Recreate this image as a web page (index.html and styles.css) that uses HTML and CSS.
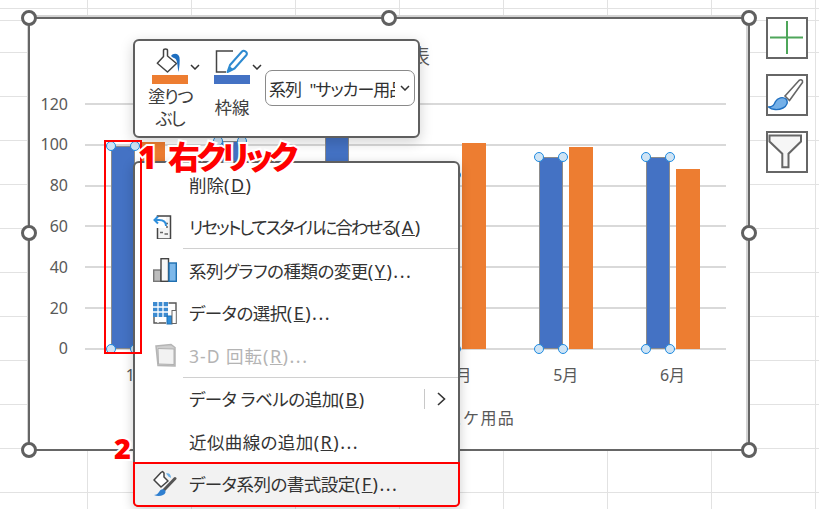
FILE: index.html
```html
<!DOCTYPE html>
<html lang="ja">
<head>
    <meta charset="UTF-8">
    <title>データ系列の書式設定</title>
    <link rel="stylesheet" href="styles.css">
</head>
<body>

<div class="sheet">
    <div class="chart">
        <div class="chart-title">月別売上表</div>
        <div class="chart-body">
            <div class="y-axis">
                <span>120</span><span>100</span><span>80</span><span>60</span><span>40</span><span>20</span><span>0</span>
            </div>
            <div class="plot">
                <div class="group">
                    <div class="bar blue" style="height: 82.5%"><i class="dot tl"></i><i class="dot tr"></i><i class="dot bl"></i><i class="dot br"></i></div>
                    <div class="bar orange" style="height: 84%"></div>
                </div>
                <div class="group">
                    <div class="bar blue" style="height: 84.5%"><i class="dot tl"></i><i class="dot tr"></i><i class="dot bl"></i><i class="dot br"></i></div>
                    <div class="bar orange" style="height: 79%"></div>
                </div>
                <div class="group">
                    <div class="bar blue" style="height: 88%"><i class="dot tl"></i><i class="dot tr"></i><i class="dot bl"></i><i class="dot br"></i></div>
                    <div class="bar orange" style="height: 70%"></div>
                </div>
                <div class="group">
                    <div class="bar blue" style="height: 70.700%"><i class="dot tl"></i><i class="dot tr"></i><i class="dot bl"></i><i class="dot br"></i></div>
                    <div class="bar orange" style="height: 83.800%"></div>
                </div>
                <div class="group">
                    <div class="bar blue" style="height: 78.200%"><i class="dot tl"></i><i class="dot tr"></i><i class="dot bl"></i><i class="dot br"></i></div>
                    <div class="bar orange" style="height: 82%"></div>
                </div>
                <div class="group">
                    <div class="bar blue" style="height: 78.200%"><i class="dot tl"></i><i class="dot tr"></i><i class="dot bl"></i><i class="dot br"></i></div>
                    <div class="bar orange" style="height: 73%"></div>
                </div>
            </div>
        </div>
        <div class="x-axis">
            <span>1月</span><span>2月</span><span>3月</span><span>4月</span><span>5月</span><span>6月</span>
        </div>
        <div class="legend">バスケ用品</div>

        <i class="handle h-tl"></i><i class="handle h-tc"></i><i class="handle h-tr"></i>
        <i class="handle h-ml"></i><i class="handle h-mr"></i>
        <i class="handle h-bl"></i><i class="handle h-bc"></i><i class="handle h-br"></i>
    </div>

    <div class="side-buttons">
        <div class="side-btn">
            <svg viewBox="2 2 38 38"><path d="M21 4V37M4 20.500H37" fill="none" stroke="#4ea65a" stroke-width="2"/></svg>
        </div>
        <div class="side-btn">
            <svg viewBox="2 2 38 38">
                <path d="M19 22L33 6.500C35 5 37 6 36.500 8.500L23.500 26.500Z" fill="#fff" stroke="#666" stroke-width="1.600"/>
                <path d="M2.500 33C7 33 8 31 9.500 27.500C11.500 23.500 17 22.500 20 25C22.500 28 21 32 17 34C12 36.500 6 36 2.500 33Z" fill="#74b0e8" stroke="#1f6fc0" stroke-width="1.400"/>
            </svg>
        </div>
        <div class="side-btn">
            <svg viewBox="2 2 38 38"><path d="M3.500 4.500H35V10.500L22.500 22.700V36.300H16.300V22.700L3.500 10.500Z" fill="#f6f6f6" stroke="#666" stroke-width="2"/></svg>
        </div>
    </div>
</div>

<div class="toolbar">
    <div class="tool">
        <div class="tool-top">
            <div class="tool-icon">
                <svg viewBox="0 0 36 28">
                    <path d="M5.300 16.300L11.500 9.500V3.500C11.500 1.500 15.500 1.500 15.500 3.500V9L24.500 16.500L15.500 25Z" fill="#fff" stroke="#444" stroke-width="1.500" stroke-linejoin="round"/>
                    <path d="M19 9C21 5.500 27 6 27.500 10.500C28 14 27.500 20 26.500 25C25.500 20 25.500 15 24 12.500C23 11 21 11 19 9Z" fill="#1f6fc0"/>
                </svg>
                <div class="swatch swatch-orange"></div>
            </div>
            <svg class="chevron" viewBox="0 0 10 6"><path d="M1 1L5 5L9 1" fill="none" stroke="#333" stroke-width="1.500"/></svg>
        </div>
        <div class="tool-label tool-label-fill">塗りつ<br>ぶし</div>
    </div>
    <div class="tool">
        <div class="tool-top">
            <div class="tool-icon">
                <svg viewBox="0 0 36 28">
                    <path d="M19 4H2.500V25H12" fill="none" stroke="#444" stroke-width="1.500"/>
                    <path d="M13.500 25L16 18L28 4.500C30 2.500 34 5.500 32.500 8L20.500 21.500Z" fill="#fff" stroke="#2e8ad0" stroke-width="2" stroke-linejoin="round"/>
                    <path d="M13 25.500L15.500 19L19.500 22.500Z" fill="#2e8ad0"/>
                </svg>
                <div class="swatch swatch-blue"></div>
            </div>
            <svg class="chevron" viewBox="0 0 10 6"><path d="M1 1L5 5L9 1" fill="none" stroke="#333" stroke-width="1.500"/></svg>
        </div>
        <div class="tool-label tool-label-single">枠線</div>
    </div>
    <div class="combo">
        <span class="combo-text">系列 "サッカー用品"</span>
        <svg class="chevron" viewBox="0 0 10 6"><path d="M1 1L5 5L9 1" fill="none" stroke="#333" stroke-width="1.500"/></svg>
    </div>
</div>

<div class="menu">
    <div class="menu-row">
        <span class="menu-icon"></span>
        <span class="menu-label">削除<span class="key">(<u>D</u>)</span></span>
    </div>
    <div class="menu-row">
        <span class="menu-icon">
            <svg viewBox="0 0 24 24">
                <path d="M4.500 1H17.500V24H4.500Z" fill="#f4f4f4" stroke="#444" stroke-width="1.500"/>
                <path d="M12.500 8.500H15M12.500 12H15M7 17.500H10M11.500 19H15" stroke="#666" stroke-width="1.500"/>
                <rect x="0" y="2" width="13" height="11" fill="#fff"/>
                <path d="M13 11C13 7 10 5 6 5H1.500M5 1.500L1.500 5L5 8.500" fill="none" stroke="#2f8fdc" stroke-width="2"/>
            </svg>
        </span>
        <span class="menu-label"><span class="tight">リセットしてスタイルに合わせる</span><span class="key">(<u>A</u>)</span></span>
    </div>
    <div class="menu-sep"></div>
    <div class="menu-row">
        <span class="menu-icon">
            <svg viewBox="0 0 24 24">
                <rect x="0.700" y="12" width="7" height="11.300" fill="#bdbdbd" stroke="#777" stroke-width="1.400"/>
                <rect x="8" y="0.700" width="7.500" height="22.600" fill="#f8f8f8" stroke="#444" stroke-width="1.400"/>
                <rect x="16" y="5" width="7.300" height="18.300" fill="#7db8ea" stroke="#1f6fb0" stroke-width="1.400"/>
            </svg>
        </span>
        <span class="menu-label"><span class="tight-some">系列グラフの種類の変更</span><span class="key">(<u>Y</u>)...</span></span>
    </div>
    <div class="menu-row">
        <span class="menu-icon">
            <svg viewBox="0 0 24 22">
                <path d="M15.500 1H23V8M1 15V21H13" fill="none" stroke="#555" stroke-width="1.400"/>
                <rect x="0" y="0" width="15" height="15" fill="#3d8bd0"/>
                <path d="M5 0V21M10 0V15M0 5H15M0 10H15" stroke="#fff" stroke-width="1.300"/>
                <rect x="14" y="14" width="5" height="8" fill="#2f8fdc" stroke="#1f6fb0"/>
                <rect x="19" y="8.500" width="4.300" height="13" fill="#fff" stroke="#666"/>
            </svg>
        </span>
        <span class="menu-label"><span class="tight-some">データの選択</span><span class="key">(<u>E</u>)...</span></span>
    </div>
    <div class="menu-row menu-row-off">
        <span class="menu-icon">
            <svg viewBox="0 0 24 24">
                <path d="M3 3L18 1.500L22 4.500V23L5 22.500Z" fill="#cfcfcf" stroke="#b5b5b5" stroke-width="1.500"/>
                <path d="M5 5.500L21 6V21.500L5.500 21Z" fill="#f2f2f2" stroke="#b0b0b0"/>
            </svg>
        </span>
        <span class="menu-label"><span class="wide">3-D 回転</span><span class="key">(<u>R</u>)...</span></span>
    </div>
    <div class="menu-sep"></div>
    <div class="menu-row">
        <span class="menu-icon"></span>
        <span class="menu-label"><span class="tight-some">データ ラベルの追加</span><span class="key">(<u>B</u>)</span></span>
        <span class="submenu">
            <svg viewBox="0 0 9 14"><path d="M1 1L7.500 7L1 13" fill="none" stroke="#333" stroke-width="1.600"/></svg>
        </span>
    </div>
    <div class="menu-row">
        <span class="menu-icon"></span>
        <span class="menu-label"><span class="wide-some">近似曲線の追加</span><span class="key">(<u>R</u>)...</span></span>
    </div>
    <div class="menu-row menu-row-active">
        <span class="menu-icon">
            <svg viewBox="0 0 24 27">
                <path d="M1 10L8 2.500L9.500 1.500L11 3V7L15 11L8 17Z" fill="#fff" stroke="#444" stroke-width="1.500" stroke-linejoin="round"/>
                <path d="M13 3.500C16 2.500 18 4.500 18 8L15.500 6.500Z" fill="#6fb2e8"/>
                <path d="M11 20L22 8.500" stroke="#555" stroke-width="3" stroke-linecap="round"/>
                <path d="M1 25C5 25 5.500 22 7.500 20C9.500 18.500 13 19.500 12.500 22.500C11.500 26 5 27 1 25Z" fill="#2f7fd0"/>
            </svg>
        </span>
        <span class="menu-label"><span class="tight-some">データ系列の書式設定</span><span class="key">(<u>F</u>)...</span></span>
    </div>
</div>

<div class="mark mark-bar"></div>
<div class="mark mark-row"></div>
<div class="note note-one">1 <span class="note-kana">右クリック</span></div>
<div class="note note-two">2</div>

</body>
</html>
```

FILE: styles.css
```css
/* シート全体 */
html, body {
    height: 100%;
}

body {
    margin: 0;
    overflow: hidden;
    font-family: "Noto Sans", "Noto Sans CJK JP", sans-serif;
    font-feature-settings: "palt";
    color: #333333;
    background-color: #ffffff;
}

.sheet {
    height: 509px;
    box-sizing: border-box;
    padding: 17px 0 0 28px;
    display: flex;
    align-items: flex-start;
    gap: 16px;
    background-color: #ffffff;
    background-image:
        linear-gradient(#e2e2e2 1px, transparent 1px),
        linear-gradient(#e2e2e2 1px, transparent 1px),
        linear-gradient(90deg, #e2e2e2 1px, transparent 1px);
    background-size: 100% 1px, 100% 44px, 104px 100%;
    background-position: 0 20px, 0 8px, 87px 0;
    background-repeat: no-repeat, repeat, repeat;
}

/* グラフ */
.chart {
    position: relative;
    width: 722px;
    height: 434px;
    box-sizing: border-box;
    border: 2px solid #666666;
    background-color: #ffffff;
    box-shadow: 0 -2px 0 #d4d4d4, -1px 0 0 #d4d4d4, inset -2px 0 0 #d4d4d4;
    color: #595959;
}

.chart-title {
    height: 64.500px;
    box-sizing: border-box;
    padding: 25px 318px 0 0;
    text-align: right;
    font-size: 20px;
    line-height: 26px;
}

.chart-body {
    display: flex;
}

.y-axis {
    width: 38px;
    margin: 0 17px -19.500px 0;
    display: flex;
    flex-direction: column;
    align-items: flex-end;
    font-size: 16px;
}

.y-axis span {
    height: 40.830px;
    line-height: 40.830px;
}

.plot {
    flex: 1;
    height: 247px;
    margin: 19.500px 22px 0 0;
    padding-bottom: 1px;
    box-sizing: border-box;
    display: flex;
    background-image: repeating-linear-gradient(#d9d9d9 0, #d9d9d9 2px, transparent 2px, transparent 40.830px);
}

.group {
    flex: 1;
    display: flex;
    justify-content: center;
    align-items: flex-end;
    gap: 6px;
}

.bar {
    position: relative;
    width: 24px;
    box-sizing: border-box;
}

.blue {
    background-color: #4472c4;
    border: 1px solid #8c8c8c;
}

.orange {
    background-color: #ed7d31;
}

.dot {
    position: absolute;
    width: 10px;
    height: 10px;
    box-sizing: border-box;
    border: 1.500px solid #1e8ae0;
    border-radius: 50%;
    background-color: #cfe4f5;
}

.tl { top: -6px; left: -6px; }
.tr { top: -6px; right: -6px; }
.bl { bottom: -6px; left: -6px; }
.br { bottom: -6px; right: -6px; }

.x-axis {
    margin: 0 22px 0 55px;
    padding-top: 13px;
    display: flex;
    font-size: 16px;
    line-height: 24px;
}

.x-axis span {
    flex: 1;
    text-align: center;
}

.legend {
    margin-top: 19px;
    padding-right: 233px;
    text-align: right;
    font-size: 16px;
    font-feature-settings: normal;
    letter-spacing: 1.300px;
    line-height: 24px;
}

.handle {
    position: absolute;
    width: 16px;
    height: 16px;
    box-sizing: border-box;
    border: 3px solid #606060;
    border-radius: 50%;
    background-color: #ffffff;
}

.h-tl { top: -9px; left: -9px; }
.h-tc { top: -9px; left: 351px; }
.h-tr { top: -9px; right: -9px; }
.h-ml { top: 206px; left: -9px; }
.h-mr { top: 206px; right: -9px; }
.h-bl { bottom: -9px; left: -9px; }
.h-bc { bottom: -9px; left: 351px; }
.h-br { bottom: -9px; right: -9px; }

/* 右側のボタン */
.side-buttons {
    display: flex;
    flex-direction: column;
    gap: 15px;
}

.side-btn {
    width: 42px;
    height: 42px;
    box-sizing: border-box;
    border: 2px solid #666666;
    background-color: #ffffff;
}

.side-btn svg {
    display: block;
    width: 38px;
    height: 38px;
}

/* ミニツールバー */
.toolbar {
    position: absolute;
    top: 39px;
    left: 133px;
    width: 287px;
    height: 99px;
    box-sizing: border-box;
    padding: 6px 0 0 13px;
    display: flex;
    align-items: flex-start;
    border: 2px solid #5f5f5f;
    border-radius: 6px;
    background-color: #ffffff;
    box-shadow: 0 4px 14px rgba(0, 0, 0, 0.18);
}

.tool {
    width: 44px;
    margin-right: 18px;
    flex-shrink: 0;
}

.tool-top {
    display: flex;
    padding-left: 4px;
    height: 38px;
}

.tool-icon {
    width: 36px;
    flex-shrink: 0;
}

.tool-icon svg {
    display: block;
    width: 36px;
    height: 28px;
}

.swatch {
    height: 9px;
}

.swatch-orange { background-color: #ed7d31; }
.swatch-blue { background-color: #4472c4; }

.chevron {
    width: 10px;
    height: 6px;
    flex-shrink: 0;
}

.tool-top .chevron {
    margin: 17px 0 0 2px;
}

.tool-label {
    width: 44px;
    text-align: center;
    font-size: 17.500px;
    line-height: 22px;
    color: #404040;
    white-space: nowrap;
}

.tool-label-fill {
    letter-spacing: -1.500px;
}

.tool-label-single {
    margin-top: 11px;
}

.combo {
    width: 150px;
    height: 36px;
    margin: 23px 0 0 -7px;
    box-sizing: border-box;
    padding: 0 4px 0 3px;
    display: flex;
    align-items: center;
    justify-content: space-between;
    border: 1px solid #8a8a8a;
    border-radius: 7px;
    flex-shrink: 0;
}

.combo-text {
    width: 126px;
    overflow: hidden;
    white-space: nowrap;
    font-size: 17px;
    letter-spacing: -1px;
    word-spacing: 5px;
    color: #303030;
}

/* コンテキストメニュー */
.menu {
    position: absolute;
    top: 161px;
    left: 133px;
    width: 327px;
    height: 346px;
    box-sizing: border-box;
    display: flex;
    flex-direction: column;
    border: 2px solid #5f5f5f;
    border-radius: 6px;
    background-color: #ffffff;
    box-shadow: 0 3px 12px rgba(0, 0, 0, 0.2);
    font-size: 17.500px;
}

.menu-row {
    flex: 1;
    display: flex;
    align-items: center;
    padding-left: 18px;
}

.menu-row-off {
    color: #b4b4b4;
}

.menu-row-active {
    background-color: #f2f2f2;
}

.menu-icon {
    width: 24px;
    height: 24px;
    margin-right: 12px;
    flex-shrink: 0;
}

.menu-icon svg {
    display: block;
    width: 24px;
    height: 100%;
}

.menu-row-active .menu-icon {
    height: 27px;
}

.menu-label {
    white-space: nowrap;
}

.key {
    font-size: 18px;
    letter-spacing: 1.500px;
}

.tight {
    letter-spacing: -2px;
}

.tight-some {
    letter-spacing: -0.500px;
}

.wide {
    letter-spacing: 1px;
}

.wide-some {
    letter-spacing: 0.400px;
}

.menu-sep {
    height: 1px;
    margin-left: 48px;
    background-color: #d0d0d0;
}

.submenu {
    margin-left: auto;
    width: 34px;
    height: 20px;
    box-sizing: border-box;
    display: flex;
    align-items: center;
    justify-content: center;
    border-left: 1px solid #c8c8c8;
}

.submenu svg {
    width: 9px;
    height: 14px;
}

/* 赤い注釈 */
.mark {
    position: absolute;
    box-sizing: border-box;
    border: 2px solid #ff0000;
}

.mark-bar {
    top: 140px;
    left: 104px;
    width: 38px;
    height: 214px;
}

.mark-row {
    top: 462px;
    left: 133px;
    width: 327px;
    height: 45px;
    border-radius: 0 0 5px 5px;
}

.note {
    position: absolute;
    font-weight: 900;
    color: #ff0000;
    -webkit-text-stroke: 4px #ffffff;
    paint-order: stroke fill;
    white-space: nowrap;
}

.note-one {
    top: 134px;
    left: 138px;
    font-size: 32px;
    line-height: 46px;
}

.note-kana {
    margin-left: 3px;
    letter-spacing: -3.500px;
}

.note-two {
    top: 428px;
    left: 114px;
    font-size: 29px;
    line-height: 40px;
}
```
